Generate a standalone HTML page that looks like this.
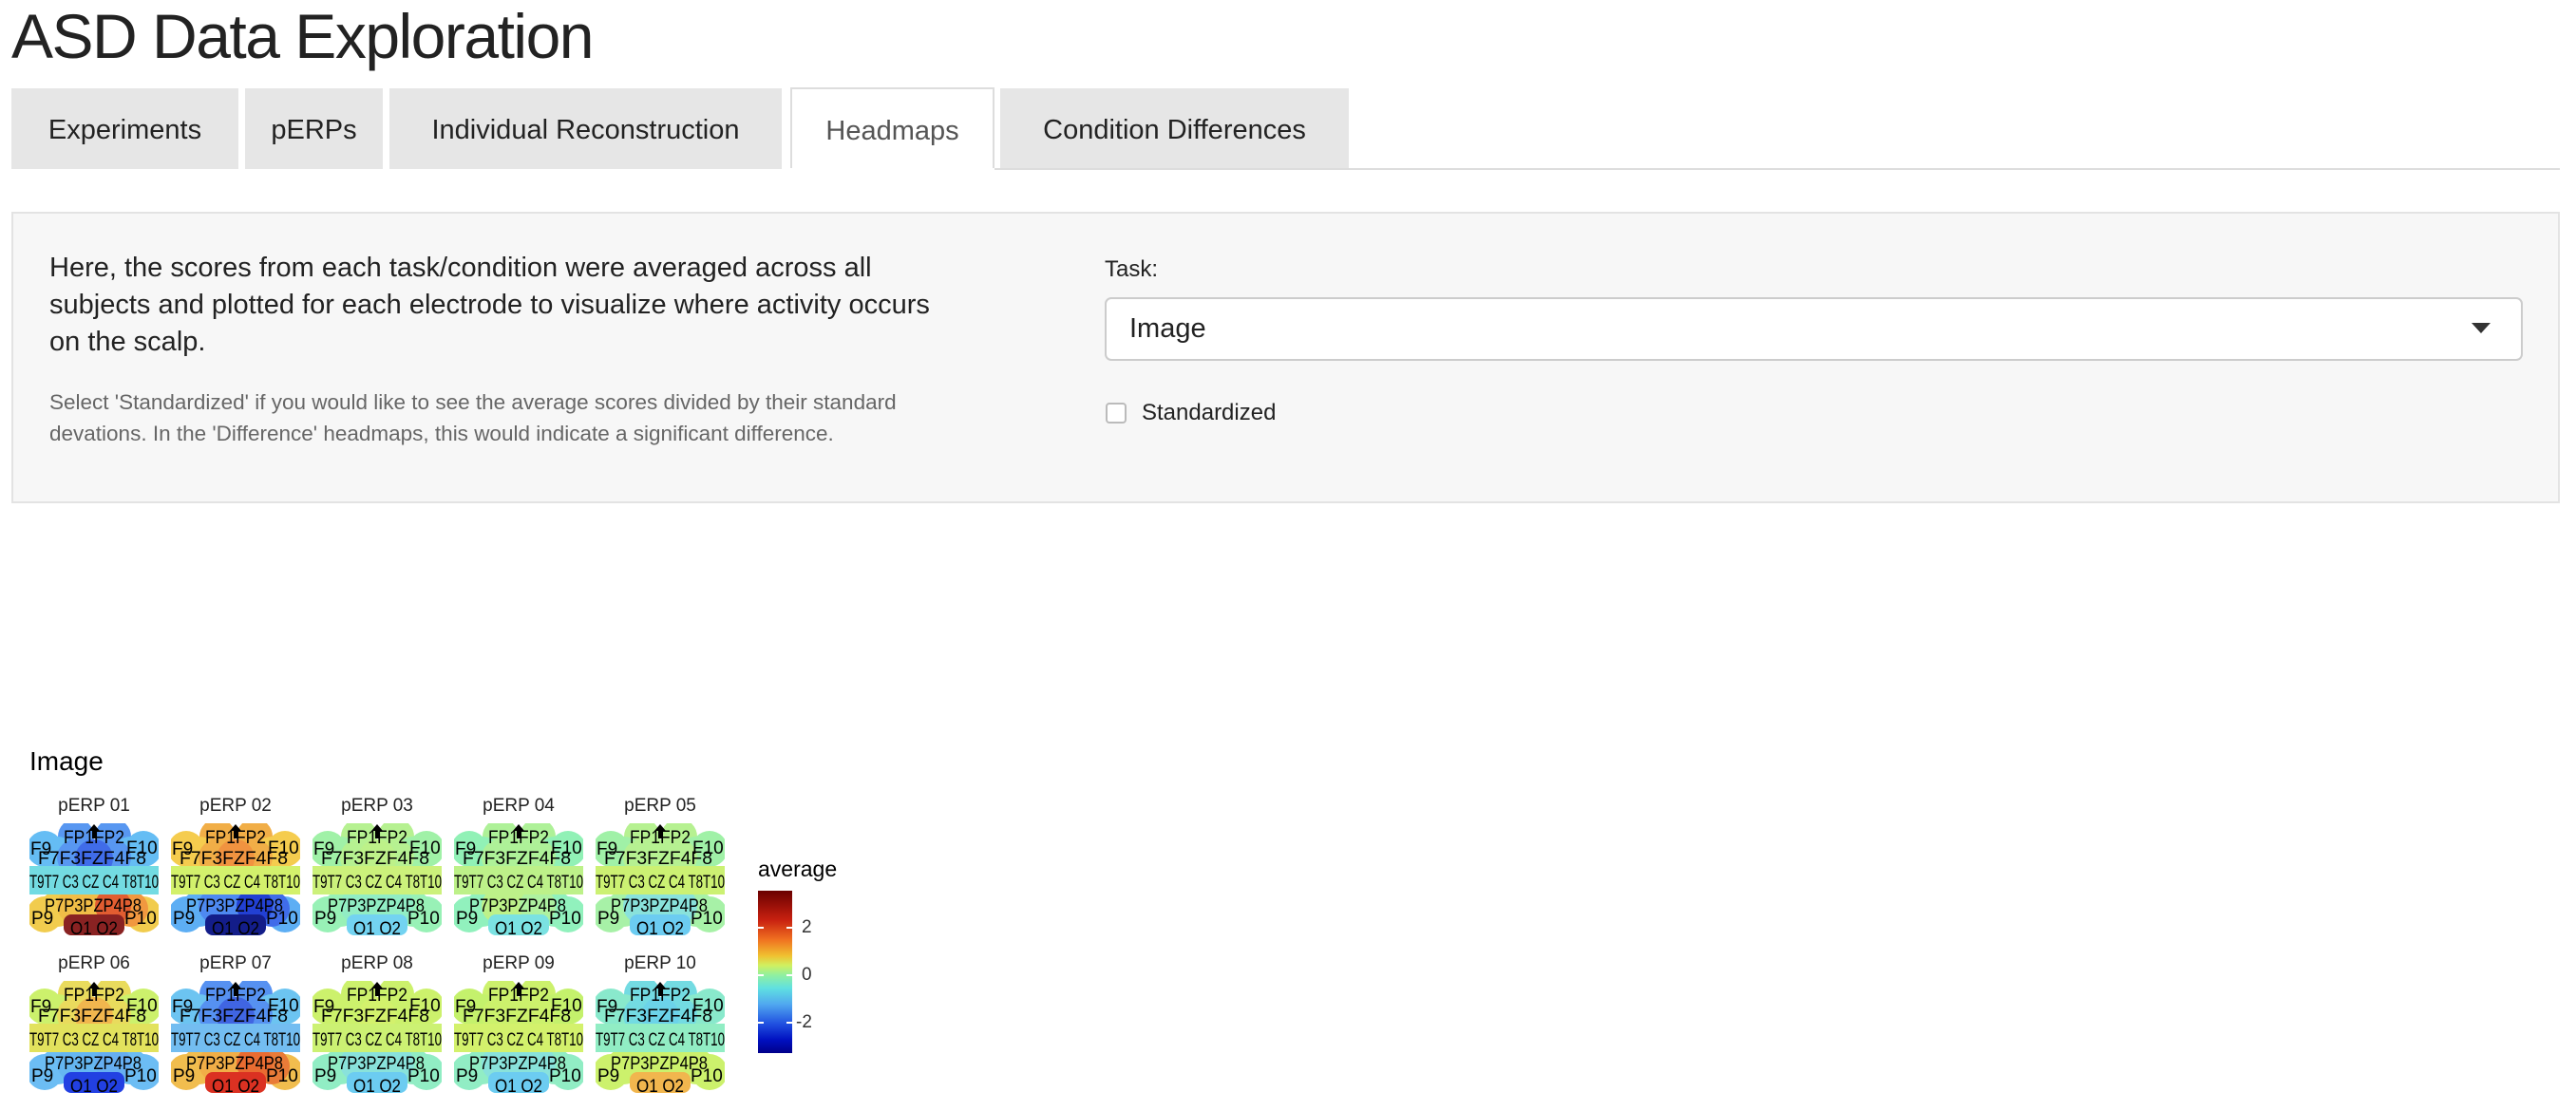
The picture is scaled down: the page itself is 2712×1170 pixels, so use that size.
<!DOCTYPE html>
<html><head><meta charset="utf-8"><style>
body{margin:0;width:2712px;height:1170px;background:#fff;font-family:"Liberation Sans",sans-serif;color:#222;position:relative;overflow:hidden}
.a{position:absolute}
h1{position:absolute;left:12px;top:0;margin:0;font-weight:normal;font-size:66px;letter-spacing:-1.5px;line-height:76px;color:#222}
.tab{position:absolute;top:93px;height:85px;background:#e6e6e6;font-size:29px;line-height:88px;text-align:center;color:#222}
.tab.act{background:#fff;border:2px solid #ddd;border-bottom:none;height:85px;top:92px;color:#555;box-sizing:border-box}
.line{position:absolute;left:12px;top:177px;width:2683px;height:2px;background:#ddd}
.well{position:absolute;left:12px;top:223px;width:2679px;height:303px;background:#f7f7f7;border:2px solid #e3e3e3}
.p1{left:52px;top:263px;font-size:29px;line-height:39px;color:#222}
.p2{left:52px;top:407px;font-size:22.5px;line-height:33px;color:#666}
.sel{left:1163px;top:313px;width:1489px;height:63px;border:2px solid #ccc;border-radius:7px;background:#fff}
svg text{font-family:"Liberation Sans",sans-serif}
.hd{position:absolute;width:136px;height:118px}
.ht{position:absolute;font-size:19px;width:136px;text-align:center;color:#222}
</style></head><body>
<h1>ASD Data Exploration</h1>
<div class="tab" style="left:12px;width:239px">Experiments</div>
<div class="tab" style="left:258px;width:145px">pERPs</div>
<div class="tab" style="left:410px;width:413px">Individual Reconstruction</div>
<div class="tab act" style="left:832px;width:215px">Headmaps</div>
<div class="tab" style="left:1053px;width:367px">Condition Differences</div>
<div class="line" style="left:1047px;width:1648px"></div>
<div class="well"></div>
<div class="a p1">Here, the scores from each task/condition were averaged across all<br>subjects and plotted for each electrode to visualize where activity occurs<br>on the scalp.</div>
<div class="a p2">Select 'Standardized' if you would like to see the average scores divided by their standard<br>devations. In the 'Difference' headmaps, this would indicate a significant difference.</div>
<div class="a" style="left:1163px;top:270px;font-size:24px;color:#222">Task:</div>
<div class="a sel"></div>
<div class="a" style="left:1189px;top:330px;font-size:29px;color:#222">Image</div>
<div class="a" style="left:2602px;top:340px;width:0;height:0;border-left:10px solid transparent;border-right:10px solid transparent;border-top:11px solid #333"></div>
<div class="a" style="left:1164px;top:424px;width:18px;height:18px;border:2px solid #bbb;border-radius:4px;background:#fff"></div>
<div class="a" style="left:1202px;top:421px;font-size:24px;color:#222">Standardized</div>

<div class="a" style="left:31px;top:786px;font-size:28px;color:#000">Image</div>

<svg width="0" height="0" style="position:absolute"><defs>
<symbol id="h" viewBox="0 0 136 118">
<g opacity="0.92">
<circle cx="16" cy="96" r="19" fill="var(--d)"/><circle cx="120" cy="96" r="19" fill="var(--d)"/>
<circle cx="30" cy="90" r="19" fill="var(--d)"/><circle cx="106" cy="90" r="19" fill="var(--f)"/>
<circle cx="48" cy="87" r="19" fill="var(--e)"/><circle cx="68" cy="86" r="19" fill="var(--e)"/><circle cx="88" cy="87" r="19" fill="var(--g)"/>
<rect x="36" y="96" width="64" height="22" rx="8" fill="var(--o)"/>
<circle cx="49" cy="14" r="19" fill="var(--b)"/><circle cx="88" cy="14" r="19" fill="var(--b)"/>
<circle cx="16" cy="27" r="19" fill="var(--a)"/><circle cx="120" cy="27" r="19" fill="var(--a)"/>
<circle cx="30" cy="33" r="19" fill="var(--a)"/><circle cx="106" cy="33" r="19" fill="var(--a)"/>
<circle cx="48" cy="36" r="19" fill="var(--b)"/><circle cx="88" cy="36" r="19" fill="var(--b)"/><circle cx="68" cy="37" r="20" fill="var(--k)"/>
<rect x="0" y="45" width="136" height="30" fill="var(--c)"/>
</g>
</symbol></defs></svg>

<div class="ht" style="left:31px;top:838px">pERP 01</div>
<div class="ht" style="left:180px;top:838px">pERP 02</div>
<div class="ht" style="left:329px;top:838px">pERP 03</div>
<div class="ht" style="left:478px;top:838px">pERP 04</div>
<div class="ht" style="left:627px;top:838px">pERP 05</div>
<div class="ht" style="left:31px;top:1004px">pERP 06</div>
<div class="ht" style="left:180px;top:1004px">pERP 07</div>
<div class="ht" style="left:329px;top:1004px">pERP 08</div>
<div class="ht" style="left:478px;top:1004px">pERP 09</div>
<div class="ht" style="left:627px;top:1004px">pERP 10</div>

<svg class="hd" style="left:31px;top:867px;--a:#58b8f4;--b:#4a8ff0;--k:#3060e8;--c:#68d8e0;--d:#f0c840;--e:#f0b838;--f:#f09030;--g:#e05020;--o:#801010" viewBox="0 0 136 118"><use href="#h"/><g font-size="19"><path d="M62 8 L68 1 L74 8 Z M66 8h4v8h-4z"/><text x="36" y="21" textLength="64" lengthAdjust="spacingAndGlyphs">FP1FP2</text><text x="1" y="33">F9</text><text x="102" y="32">F10</text><text x="9" y="43" textLength="114" lengthAdjust="spacingAndGlyphs">F7F3FZF4F8</text><text x="0" y="68" textLength="136" lengthAdjust="spacingAndGlyphs">T9T7 C3 CZ C4 T8T10</text><text x="16" y="93" textLength="102" lengthAdjust="spacingAndGlyphs">P7P3PZP4P8</text><text x="2" y="106">P9</text><text x="100" y="106">P10</text><text x="43" y="117" textLength="50" lengthAdjust="spacingAndGlyphs">O1 O2</text></g></svg>
<svg class="hd" style="left:180px;top:867px;--a:#f5c840;--b:#f0a838;--k:#f08a30;--c:#d0f060;--d:#50a8f4;--e:#4080f0;--f:#3060e8;--g:#1030d0;--o:#000a80" viewBox="0 0 136 118"><use href="#h"/><g font-size="19"><path d="M62 8 L68 1 L74 8 Z M66 8h4v8h-4z"/><text x="36" y="21" textLength="64" lengthAdjust="spacingAndGlyphs">FP1FP2</text><text x="1" y="33">F9</text><text x="102" y="32">F10</text><text x="9" y="43" textLength="114" lengthAdjust="spacingAndGlyphs">F7F3FZF4F8</text><text x="0" y="68" textLength="136" lengthAdjust="spacingAndGlyphs">T9T7 C3 CZ C4 T8T10</text><text x="16" y="93" textLength="102" lengthAdjust="spacingAndGlyphs">P7P3PZP4P8</text><text x="2" y="106">P9</text><text x="100" y="106">P10</text><text x="43" y="117" textLength="50" lengthAdjust="spacingAndGlyphs">O1 O2</text></g></svg>
<svg class="hd" style="left:329px;top:867px;--a:#98f0a0;--b:#b0f088;--k:#b8f080;--c:#c8f070;--d:#90f0b0;--e:#88ecc0;--f:#90f0b0;--g:#88ecc0;--o:#68d0f0" viewBox="0 0 136 118"><use href="#h"/><g font-size="19"><path d="M62 8 L68 1 L74 8 Z M66 8h4v8h-4z"/><text x="36" y="21" textLength="64" lengthAdjust="spacingAndGlyphs">FP1FP2</text><text x="1" y="33">F9</text><text x="102" y="32">F10</text><text x="9" y="43" textLength="114" lengthAdjust="spacingAndGlyphs">F7F3FZF4F8</text><text x="0" y="68" textLength="136" lengthAdjust="spacingAndGlyphs">T9T7 C3 CZ C4 T8T10</text><text x="16" y="93" textLength="102" lengthAdjust="spacingAndGlyphs">P7P3PZP4P8</text><text x="2" y="106">P9</text><text x="100" y="106">P10</text><text x="43" y="117" textLength="50" lengthAdjust="spacingAndGlyphs">O1 O2</text></g></svg>
<svg class="hd" style="left:478px;top:867px;--a:#88f0b0;--b:#a8f090;--k:#a8f090;--c:#b8f080;--d:#88f0b8;--e:#b8f080;--f:#88f0b8;--g:#a8f098;--o:#70e0e0" viewBox="0 0 136 118"><use href="#h"/><g font-size="19"><path d="M62 8 L68 1 L74 8 Z M66 8h4v8h-4z"/><text x="36" y="21" textLength="64" lengthAdjust="spacingAndGlyphs">FP1FP2</text><text x="1" y="33">F9</text><text x="102" y="32">F10</text><text x="9" y="43" textLength="114" lengthAdjust="spacingAndGlyphs">F7F3FZF4F8</text><text x="0" y="68" textLength="136" lengthAdjust="spacingAndGlyphs">T9T7 C3 CZ C4 T8T10</text><text x="16" y="93" textLength="102" lengthAdjust="spacingAndGlyphs">P7P3PZP4P8</text><text x="2" y="106">P9</text><text x="100" y="106">P10</text><text x="43" y="117" textLength="50" lengthAdjust="spacingAndGlyphs">O1 O2</text></g></svg>
<svg class="hd" style="left:627px;top:867px;--a:#98f0a0;--b:#b0f088;--k:#b0f088;--c:#c8f068;--d:#a0f0a0;--e:#80e0d8;--f:#a0f0a0;--g:#80e0d8;--o:#60c8f0" viewBox="0 0 136 118"><use href="#h"/><g font-size="19"><path d="M62 8 L68 1 L74 8 Z M66 8h4v8h-4z"/><text x="36" y="21" textLength="64" lengthAdjust="spacingAndGlyphs">FP1FP2</text><text x="1" y="33">F9</text><text x="102" y="32">F10</text><text x="9" y="43" textLength="114" lengthAdjust="spacingAndGlyphs">F7F3FZF4F8</text><text x="0" y="68" textLength="136" lengthAdjust="spacingAndGlyphs">T9T7 C3 CZ C4 T8T10</text><text x="16" y="93" textLength="102" lengthAdjust="spacingAndGlyphs">P7P3PZP4P8</text><text x="2" y="106">P9</text><text x="100" y="106">P10</text><text x="43" y="117" textLength="50" lengthAdjust="spacingAndGlyphs">O1 O2</text></g></svg>

<svg class="hd" style="left:31px;top:1033px;--a:#c8f060;--b:#e8d850;--k:#f0b040;--c:#e0e050;--d:#60b8f4;--e:#58b0f0;--f:#60b8f4;--g:#5aa8f0;--o:#1030e0" viewBox="0 0 136 118"><use href="#h"/><g font-size="19"><path d="M62 8 L68 1 L74 8 Z M66 8h4v8h-4z"/><text x="36" y="21" textLength="64" lengthAdjust="spacingAndGlyphs">FP1FP2</text><text x="1" y="33">F9</text><text x="102" y="32">F10</text><text x="9" y="43" textLength="114" lengthAdjust="spacingAndGlyphs">F7F3FZF4F8</text><text x="0" y="68" textLength="136" lengthAdjust="spacingAndGlyphs">T9T7 C3 CZ C4 T8T10</text><text x="16" y="93" textLength="102" lengthAdjust="spacingAndGlyphs">P7P3PZP4P8</text><text x="2" y="106">P9</text><text x="100" y="106">P10</text><text x="43" y="117" textLength="50" lengthAdjust="spacingAndGlyphs">O1 O2</text></g></svg>
<svg class="hd" style="left:180px;top:1033px;--a:#60c0f0;--b:#4888f0;--k:#3058e0;--c:#68b8f0;--d:#f0b840;--e:#f0a838;--f:#e87028;--g:#e86020;--o:#d82010" viewBox="0 0 136 118"><use href="#h"/><g font-size="19"><path d="M62 8 L68 1 L74 8 Z M66 8h4v8h-4z"/><text x="36" y="21" textLength="64" lengthAdjust="spacingAndGlyphs">FP1FP2</text><text x="1" y="33">F9</text><text x="102" y="32">F10</text><text x="9" y="43" textLength="114" lengthAdjust="spacingAndGlyphs">F7F3FZF4F8</text><text x="0" y="68" textLength="136" lengthAdjust="spacingAndGlyphs">T9T7 C3 CZ C4 T8T10</text><text x="16" y="93" textLength="102" lengthAdjust="spacingAndGlyphs">P7P3PZP4P8</text><text x="2" y="106">P9</text><text x="100" y="106">P10</text><text x="43" y="117" textLength="50" lengthAdjust="spacingAndGlyphs">O1 O2</text></g></svg>
<svg class="hd" style="left:329px;top:1033px;--a:#c8f060;--b:#c8f060;--k:#d0f060;--c:#c8f068;--d:#88ecc0;--e:#80e0d8;--f:#88ecc0;--g:#80e0d8;--o:#60c8f0" viewBox="0 0 136 118"><use href="#h"/><g font-size="19"><path d="M62 8 L68 1 L74 8 Z M66 8h4v8h-4z"/><text x="36" y="21" textLength="64" lengthAdjust="spacingAndGlyphs">FP1FP2</text><text x="1" y="33">F9</text><text x="102" y="32">F10</text><text x="9" y="43" textLength="114" lengthAdjust="spacingAndGlyphs">F7F3FZF4F8</text><text x="0" y="68" textLength="136" lengthAdjust="spacingAndGlyphs">T9T7 C3 CZ C4 T8T10</text><text x="16" y="93" textLength="102" lengthAdjust="spacingAndGlyphs">P7P3PZP4P8</text><text x="2" y="106">P9</text><text x="100" y="106">P10</text><text x="43" y="117" textLength="50" lengthAdjust="spacingAndGlyphs">O1 O2</text></g></svg>
<svg class="hd" style="left:478px;top:1033px;--a:#c0f060;--b:#c8f060;--k:#c8f060;--c:#d0f060;--d:#88ecc0;--e:#80e0d8;--f:#88ecc0;--g:#80e0d8;--o:#60c8f0" viewBox="0 0 136 118"><use href="#h"/><g font-size="19"><path d="M62 8 L68 1 L74 8 Z M66 8h4v8h-4z"/><text x="36" y="21" textLength="64" lengthAdjust="spacingAndGlyphs">FP1FP2</text><text x="1" y="33">F9</text><text x="102" y="32">F10</text><text x="9" y="43" textLength="114" lengthAdjust="spacingAndGlyphs">F7F3FZF4F8</text><text x="0" y="68" textLength="136" lengthAdjust="spacingAndGlyphs">T9T7 C3 CZ C4 T8T10</text><text x="16" y="93" textLength="102" lengthAdjust="spacingAndGlyphs">P7P3PZP4P8</text><text x="2" y="106">P9</text><text x="100" y="106">P10</text><text x="43" y="117" textLength="50" lengthAdjust="spacingAndGlyphs">O1 O2</text></g></svg>
<svg class="hd" style="left:627px;top:1033px;--a:#80e8c8;--b:#68d8e0;--k:#60d0e8;--c:#88ecc0;--d:#c8f060;--e:#c8f060;--f:#c8f060;--g:#c8f060;--o:#f0b040" viewBox="0 0 136 118"><use href="#h"/><g font-size="19"><path d="M62 8 L68 1 L74 8 Z M66 8h4v8h-4z"/><text x="36" y="21" textLength="64" lengthAdjust="spacingAndGlyphs">FP1FP2</text><text x="1" y="33">F9</text><text x="102" y="32">F10</text><text x="9" y="43" textLength="114" lengthAdjust="spacingAndGlyphs">F7F3FZF4F8</text><text x="0" y="68" textLength="136" lengthAdjust="spacingAndGlyphs">T9T7 C3 CZ C4 T8T10</text><text x="16" y="93" textLength="102" lengthAdjust="spacingAndGlyphs">P7P3PZP4P8</text><text x="2" y="106">P9</text><text x="100" y="106">P10</text><text x="43" y="117" textLength="50" lengthAdjust="spacingAndGlyphs">O1 O2</text></g></svg>

<div class="a" style="left:798px;top:902px;font-size:23px;color:#000">average</div>
<div class="a" style="left:798px;top:938px;width:36px;height:171px;background:linear-gradient(to bottom,#6a0000 0%,#c82010 18%,#f07020 30%,#f0c030 40%,#d0f060 46%,#90f0a0 52%,#60e0e0 60%,#50a8f0 70%,#2050e0 82%,#0010c0 92%,#00008a 100%)"></div>
<div class="a" style="left:798px;top:976px;width:6px;height:2px;background:#fff"></div><div class="a" style="left:828px;top:976px;width:6px;height:2px;background:#fff"></div>
<div class="a" style="left:798px;top:1026px;width:6px;height:2px;background:#fff"></div><div class="a" style="left:828px;top:1026px;width:6px;height:2px;background:#fff"></div>
<div class="a" style="left:798px;top:1076px;width:6px;height:2px;background:#fff"></div><div class="a" style="left:828px;top:1076px;width:6px;height:2px;background:#fff"></div>
<div class="a" style="left:844px;top:966px;font-size:19px;color:#333">2</div>
<div class="a" style="left:844px;top:1016px;font-size:19px;color:#333">0</div>
<div class="a" style="left:838px;top:1066px;font-size:19px;color:#333">-2</div>
</body></html>
